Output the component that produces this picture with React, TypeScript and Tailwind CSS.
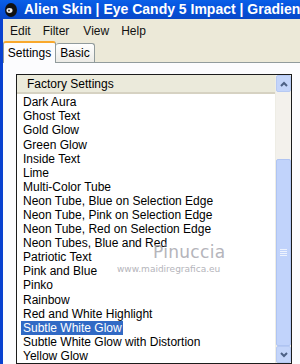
const items = [
  "Dark Aura",
  "Ghost Text",
  "Gold Glow",
  "Green Glow",
  "Inside Text",
  "Lime",
  "Multi-Color Tube",
  "Neon Tube, Blue on Selection Edge",
  "Neon Tube, Pink on Selection Edge",
  "Neon Tube, Red on Selection Edge",
  "Neon Tubes, Blue and Red",
  "Patriotic Text",
  "Pink and Blue",
  "Pinko",
  "Rainbow",
  "Red and White Highlight",
  "Subtle White Glow",
  "Subtle White Glow with Distortion",
  "Yellow Glow",
];

const ui = { fontFamily: '"Liberation Sans", Arial, sans-serif' };

function TitleBar() {
  return (
    <div className="h-[22px] flex items-center overflow-hidden bg-gradient-to-b from-[#0A5FE8] via-[#0551DA] to-[#0848C8] text-white">
      <svg width="16" height="16" viewBox="0 0 16 16" className="ml-[3px] mr-[5px] shrink-0">
        <ellipse cx="8" cy="8" rx="6" ry="7" fill="#111" />
        <ellipse cx="6.5" cy="8.5" rx="3" ry="2.4" fill="#eee" />
        <circle cx="6" cy="8.5" r="1" fill="#333" />
      </svg>
      <span className="font-bold text-[14px] whitespace-nowrap" style={ui}>
        Alien Skin | Eye Candy 5 Impact | Gradient Glow
      </span>
    </div>
  );
}

function MenuBar() {
  return (
    <div className="h-[22px] pt-[1px] flex items-center text-[12px] text-[#111] bg-[#ECE9D8]" style={ui}>
      <span className="ml-[7px]">Edit</span>
      <span className="ml-[12px]">Filter</span>
      <span className="ml-[14px]">View</span>
      <span className="ml-[12px]">Help</span>
    </div>
  );
}

function ScrollBar() {
  return (
    <div className="w-[16px] flex flex-col bg-[#F3F1EC] border-l border-[#EEEDE5]">
      <div className="h-[17px] rounded-[2px] bg-[#C4D5FA] border border-[#B6C9F3] flex items-center justify-center">
        <svg width="8" height="6" viewBox="0 0 8 6">
          <path d="M1 5 L4 2 L7 5" stroke="#4D6185" strokeWidth="2" fill="none" />
        </svg>
      </div>
      <div className="h-[67px]" />
      <div className="flex-1 rounded-[2px] bg-[#C1D3FB] border border-[#AFC4F2] flex items-center justify-center">
        <div className="flex flex-col gap-[1px]">
          <div className="w-[7px] h-[1px] bg-[#EEF3FE]" />
          <div className="w-[7px] h-[1px] bg-[#EEF3FE]" />
          <div className="w-[7px] h-[1px] bg-[#EEF3FE]" />
          <div className="w-[7px] h-[1px] bg-[#EEF3FE]" />
        </div>
      </div>
      <div className="h-[17px] rounded-[2px] bg-[#C4D5FA] border border-[#B6C9F3] flex items-center justify-center">
        <svg width="8" height="6" viewBox="0 0 8 6">
          <path d="M1 1 L4 4 L7 1" stroke="#4D6185" strokeWidth="2" fill="none" />
        </svg>
      </div>
    </div>
  );
}

export default function App() {
  return (
    <div className="w-[300px] h-[364px] overflow-hidden flex flex-col bg-[#ECE9D8]" style={ui}>
      <TitleBar />
      <div className="flex-1 flex border-l-[3px] border-[#0841D0]">
        <div className="flex-1 flex flex-col bg-[#ECE9D8]">
          <MenuBar />
          <div className="h-[22px] flex items-end text-[12px] text-black border-b border-[#919B9C]">
            <div className="h-[22px] w-[53px] -mb-[1px] bg-[#FCFCFE] border border-b-0 border-[#919B9C] border-t-2 border-t-[#F9A82C] rounded-t-[3px] flex items-center justify-center">
              Settings
            </div>
            <div className="h-[19px] w-[39px] bg-gradient-to-b from-[#FFFFFF] to-[#ECEBE6] border border-l-0 border-b-0 border-[#919B9C] rounded-t-[3px] flex items-center justify-center">
              Basic
            </div>
          </div>
          <div className="flex-1 bg-[#FCFCFE] pl-[13px] pr-[8px] pt-[11px]">
            <div className="h-full border border-[#1C1C1C] bg-white flex relative">
              <div className="flex-1 flex flex-col">
                <div className="h-[19px] bg-[#EBEADB] border-b-[2px] border-[#D6D2C2] flex items-center pl-[10px] text-[12px] text-black">
                  Factory Settings
                </div>
                <div className="flex flex-col pl-[4px] pt-[1px]">
                  {items.map((it) => (
                    <div key={it} className="h-[14.1px] flex items-center text-[12px] leading-[14px] text-black whitespace-nowrap">
                      <span className={it === "Subtle White Glow" ? "bg-[#316AC5] text-white pl-[2px] pr-[1px]" : "pl-[2px]"}>
                        {it}
                      </span>
                    </div>
                  ))}
                </div>
              </div>
              <ScrollBar />
              <div className="absolute left-[136px] top-[168px] text-[17px] leading-[18px] tracking-[0.3px] text-[#A3A3AB] opacity-80 pointer-events-none" style={{ fontFamily: '"DejaVu Sans", sans-serif' }}>
                Pinuccia
              </div>
              <div className="absolute left-[100px] top-[189px] text-[9px] leading-[11px] text-[#A3A3AB] opacity-80 pointer-events-none" style={{ fontFamily: '"DejaVu Sans", sans-serif' }}>
                www.maidiregrafica.eu
              </div>
            </div>
          </div>
        </div>
      </div>
    </div>
  );
}
